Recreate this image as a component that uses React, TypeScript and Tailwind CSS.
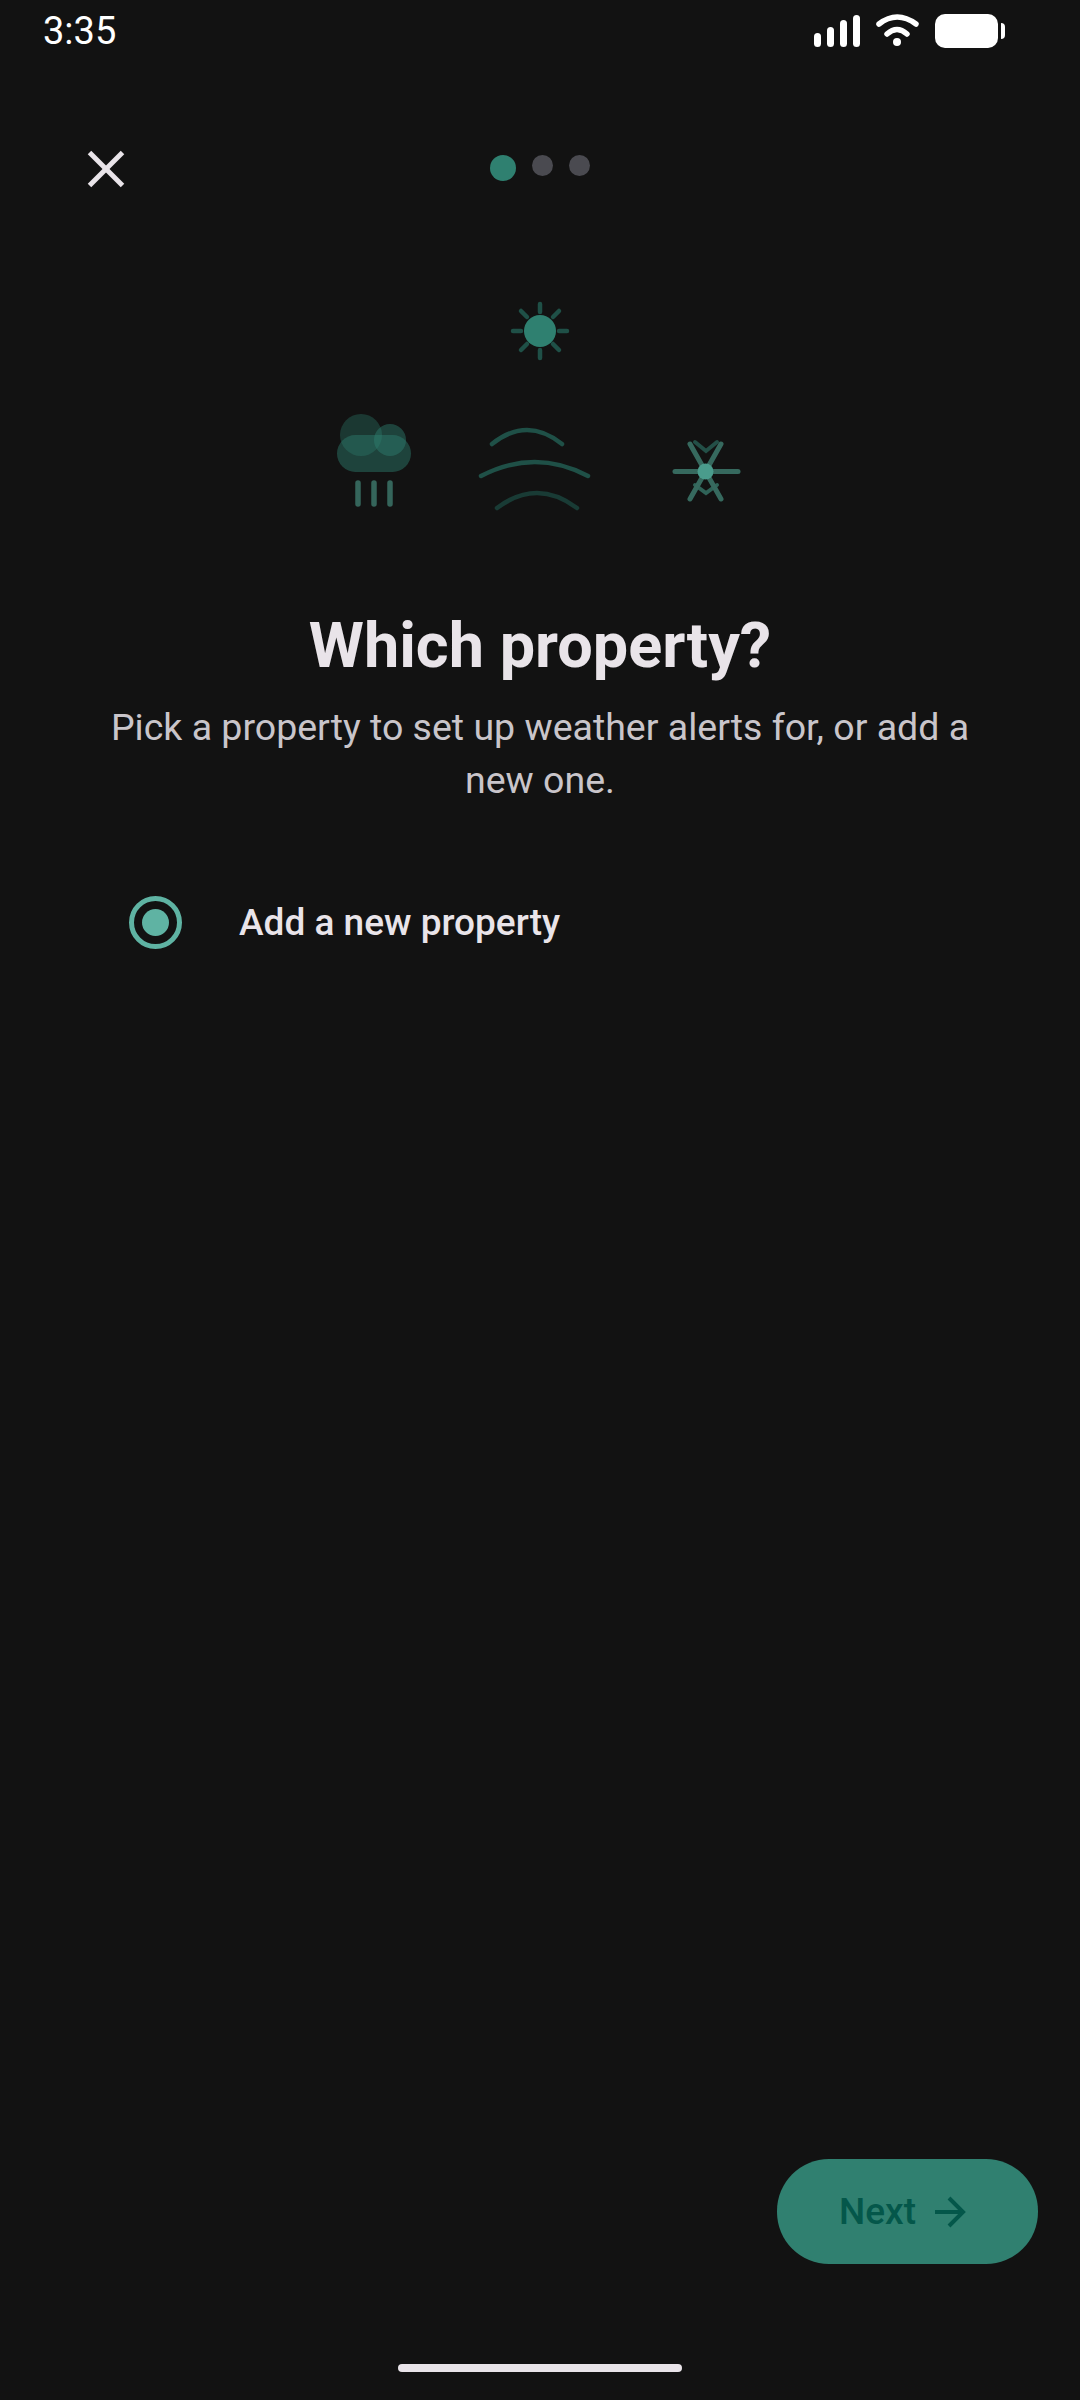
import React from 'react';
import { X, ArrowRight } from 'lucide-react';

function SignalIcon() {
  return (
    <div className="flex items-end gap-[6px] h-[32px]">
      <div className="w-[7px] h-[14px] rounded-full bg-white" />
      <div className="w-[7px] h-[20px] rounded-full bg-white" />
      <div className="w-[7px] h-[27px] rounded-full bg-white" />
      <div className="w-[7px] h-[32px] rounded-full bg-white" />
    </div>
  );
}

function WifiIcon() {
  return (
    <svg width="46" height="34" viewBox="875 15 46 34" fill="none" stroke="#fff" strokeLinecap="round" strokeWidth="5.5">
      <path d="M879 25 Q897 11 916 25" />
      <path d="M887 35 Q897 26 907 35" />
      <circle cx="897" cy="43" r="4" fill="#fff" stroke="none" />
    </svg>
  );
}

function BatteryIcon() {
  return (
    <div className="flex items-center gap-[3px]">
      <div className="w-[63px] h-[34px] rounded-[10px] bg-white" />
      <div className="w-[4px] h-[16px] rounded-r-full bg-white" />
    </div>
  );
}

function WeatherArt() {
  return (
    <svg className="block mx-auto" width="480" height="250" viewBox="300 280 480 250" fill="none" strokeLinecap="round">
      {/* sun */}
      <circle cx="540" cy="331" r="16" fill="#2f8070" />
      <g stroke="#1f5047" strokeWidth="4.5">
        <path d="M540 304V312M540 350V358M513 331H521M559 331H567" />
        <path d="M521 311L527 317M559 311L553 317M521 350L527 344M559 350L553 344" />
      </g>
      {/* cloud */}
      <rect x="337" y="435" width="74" height="37" rx="18.5" fill="#2f8070" fillOpacity="0.45" />
      <circle cx="361" cy="435" r="21" fill="#2f8070" fillOpacity="0.35" />
      <circle cx="390" cy="440" r="16" fill="#2f8070" fillOpacity="0.45" />
      <g stroke="#35655b" strokeWidth="5.5">
        <path d="M358 483V504M374 483V504M390 483V504" />
      </g>
      {/* wind */}
      <g strokeWidth="4.5">
        <path d="M492 444Q527 416 562 444" stroke="#1f5047" />
        <path d="M481 476Q535 448 588 476" stroke="#1f5047" />
        <path d="M497 508Q537 478 577 508" stroke="#193b35" />
      </g>
      {/* snow */}
      <g strokeWidth="4">
        <path d="M695 442L706 451L717 442" stroke="#234f47" />
        <path d="M695 485L706 493L717 485" stroke="#2f6257" />
      </g>
      <g stroke="#36695e" strokeWidth="5">
        <path d="M675 471.5H738" />
        <path d="M690 444L721 499M721 444L690 499" />
      </g>
      <circle cx="705.5" cy="471.5" r="8" fill="#4a9c8c" />
    </svg>
  );
}

export default function App() {
  return (
    <div className="min-h-[2400px] flex flex-col bg-[#121212] font-['Roboto',sans-serif]">
      <div className="flex items-center justify-between h-[62px] pl-[43px] pr-[75px]">
        <span className="text-[38px] leading-[60px] text-white">3:35</span>
        <div className="flex items-center">
          <SignalIcon />
          <div className="ml-[15px] mr-[14px]">
            <WifiIcon />
          </div>
          <BatteryIcon />
        </div>
      </div>

      <div className="grid grid-cols-[1fr_auto_1fr] items-start px-[75px] pt-[84px]">
        <X className="w-[66px] h-[66px] -mt-[10px] -ml-[2px] text-[#e9e4e9]" strokeWidth={1.8} strokeLinecap="butt" />
        <div className="flex items-start pt-[9px]">
          <div className="w-[26px] h-[26px] rounded-full bg-[#2f8070]" />
          <div className="w-[21px] h-[21px] ml-[16px] rounded-full bg-[#4a4a50]" />
          <div className="w-[21px] h-[21px] ml-[16px] rounded-full bg-[#4a4a50]" />
        </div>
      </div>

      <div className="mt-[78px]">
        <WeatherArt />
      </div>

      <h1 className="mt-[80px] text-center text-[63px] leading-[72px] font-bold text-[#e9e4e9]">Which property?</h1>
      <p className="mx-auto mt-[19px] w-[880px] text-center text-[37.5px] leading-[53px] text-[#c9c5ca]">
        Pick a property to set up weather alerts for, or add a new one.
      </p>

      <div className="flex items-center mt-[89px] pl-[129px] gap-[57px]">
        <div className="flex items-center justify-center w-[53px] h-[53px] rounded-full border-[5px] border-[#5fb3a3]">
          <div className="w-[27px] h-[27px] rounded-full bg-[#5fb3a3]" />
        </div>
        <span className="text-[37px] leading-[53px] font-medium text-[#e9e4e9]">Add a new property</span>
      </div>

      <div className="flex-1" />

      <div className="flex justify-end pr-[42px]">
        <button className="flex items-center gap-[9px] w-[261px] h-[105px] pl-[62px] rounded-[52px] bg-[#308070] text-[#04574a]">
          <span className="text-[37px] font-medium">Next</span>
          <ArrowRight className="w-[48px] h-[48px]" strokeWidth={2} strokeLinecap="butt" strokeLinejoin="miter" />
        </button>
      </div>

      <div className="flex justify-center pt-[100px] pb-[28px]">
        <div className="w-[284px] h-[8px] rounded-full bg-[#e9e4e9]" />
      </div>
    </div>
  );
}
